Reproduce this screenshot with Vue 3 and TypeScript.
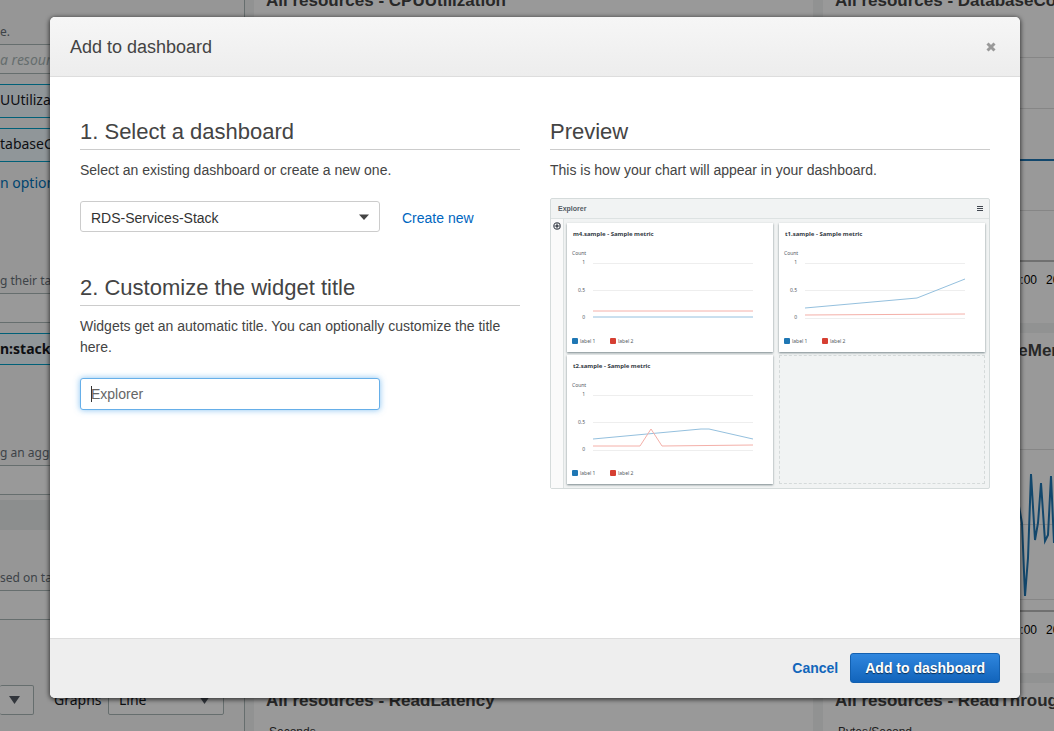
<script setup lang="ts">
import { ref } from 'vue'

interface Series {
  title: string
  blue: string
  red: string
  zero: boolean
}

const previews: Series[] = [
  { title: 'm4.sample - Sample metric', blue: '26,94 140,94 186,94', red: '26,88 140,88 186,88', zero: false },
  { title: 't1.sample - Sample metric', blue: '26,85 138,75 186,56', red: '26,92 186,91', zero: true },
  { title: 't2.sample - Sample metric', blue: '26,84 134,74 142,74 186,84', red: '26,91 73,91 84,74 95,91 186,90', zero: true },
]

const metrics = [
  { title: 'All resources - CPUUtilization', unit: 'Percent', chart: '' },
  { title: 'All resources - DatabaseConnections', unit: 'Count', chart: 'flat' },
  { title: 'All resources - FreeStorageSpace', unit: 'Bytes', chart: '' },
  { title: 'All resources - FreeableMemory', unit: 'Bytes', chart: 'wave' },
  { title: 'All resources - ReadLatency', unit: 'Seconds', chart: '' },
  { title: 'All resources - ReadThroughput', unit: 'Bytes/Second', chart: '' },
]

const dashboard = ref('RDS-Services-Stack')
const widgetTitle = ref('')
</script>

<template>
  <div class="page">
    <aside class="sidebar">
      <p class="hint">e.</p>
      <div class="field"><i>a resource</i></div>
      <div class="token">UUtilization</div>
      <div class="token">tabaseConnections</div>
      <a class="more" href="#">n options</a>
      <p class="hint spaced">g their tags</p>
      <div class="field"></div>
      <div class="token tag">n:stack-name</div>
      <p class="hint spaced">g an aggregation</p>
      <div class="field"></div>
      <div class="band"></div>
      <p class="hint near">sed on tags</p>
      <div class="field"></div>
      <div class="controls">
        <div class="pick first">
          <select aria-label="Columns"><option></option></select>
          <svg width="11" height="8" viewBox="0 0 11 8"><path d="M0 0h11L5.500 8z" fill="#545b64" /></svg>
        </div>
        <label for="graphs">Graphs</label>
        <div class="pick">
          <select id="graphs"><option>Line</option></select>
          <svg width="11" height="8" viewBox="0 0 11 8"><path d="M0 0h11L5.500 8z" fill="#545b64" /></svg>
        </div>
      </div>
    </aside>

    <main class="metrics">
      <section v-for="m in metrics" :key="m.title" class="metric">
        <h2>{{ m.title }}</h2>
        <p>{{ m.unit }}</p>
        <svg v-if="m.chart === 'flat'" class="plot" viewBox="0 0 559 340">
          <path d="M40 74.500H540M40 125.500H540M40 227.500H540" stroke="#e0e0e0" />
          <path d="M40 278H540" stroke="#bbb" stroke-width="2" />
          <path d="M40 177H540" stroke="#1f77b4" stroke-width="2" fill="none" />
          <text x="214" y="301" text-anchor="end">19:00</text>
          <text x="223" y="301">20:00</text>
        </svg>
        <svg v-if="m.chart === 'wave'" class="plot" viewBox="0 0 559 340">
          <path d="M40 116.500H540M40 191.500H540M40 266.500H540" stroke="#e0e0e0" />
          <path d="M40 278H540" stroke="#bbb" stroke-width="2" />
          <path d="M190 140L199 190L202 263L205 225L208 141L212 207L215 190L218 150L222 208L225 202L228 143L231 210" stroke="#1f77b4" stroke-width="2" fill="none" />
          <text x="214" y="301" text-anchor="end">19:00</text>
          <text x="223" y="301">20:00</text>
        </svg>
      </section>
    </main>

    <div class="overlay">
      <form class="modal" role="dialog" aria-labelledby="modal-title" @submit.prevent>
        <header class="modal-head">
          <h1 id="modal-title">Add to dashboard</h1>
          <button type="button" class="close" aria-label="Close">
            <svg width="10" height="10" viewBox="0 0 10 10"><path d="M1.500 1.500l7 7M8.500 1.500l-7 7" stroke="#999" stroke-width="3" /></svg>
          </button>
        </header>

        <div class="modal-body">
          <div>
            <h2 class="heading">1. Select a dashboard</h2>
            <p class="text"><label for="dashboard">Select an existing dashboard or create a new one.</label></p>
            <div class="row">
              <div class="select">
                <select id="dashboard" v-model="dashboard"><option>RDS-Services-Stack</option></select>
                <svg width="10" height="6" viewBox="0 0 10 6"><path d="M0 .5h10L5 6z" fill="#444" /></svg>
              </div>
              <a href="#">Create new</a>
            </div>
            <h2 class="heading second">2. Customize the widget title</h2>
            <p class="text"><label for="widget">Widgets get an automatic title. You can optionally customize the title here.</label></p>
            <div class="input">
              <input id="widget" v-model="widgetTitle" type="text" placeholder="Explorer" />
              <span class="caret"></span>
            </div>
          </div>

          <div>
            <h2 class="heading">Preview</h2>
            <p class="text">This is how your chart will appear in your dashboard.</p>
            <div class="preview">
              <div class="preview-head">
                <span>Explorer</span>
                <svg width="6" height="6" viewBox="0 0 6 6"><path d="M0 .5h6M0 2.500h6M0 4.500h6" stroke="#414750" /></svg>
              </div>
              <div class="preview-main">
                <div class="strip">
                  <svg width="8" height="8" viewBox="0 0 8 8" fill="none" stroke="#414750">
                    <circle cx="4" cy="4" r="3.200" stroke-width="1.100" />
                    <path d="M4 1v6M1 4h6" stroke-width=".8" />
                    <circle cx="4" cy="4" r="1" fill="#414750" />
                  </svg>
                </div>
                <div class="widgets">
                  <div v-for="p in previews" :key="p.title" class="widget">
                    <svg viewBox="0 0 206 129">
                      <text class="w-title" x="6" y="13">{{ p.title }}</text>
                      <text x="5" y="32">Count</text>
                      <text x="18" y="41" text-anchor="end">1</text>
                      <text x="18" y="69" text-anchor="end">0.5</text>
                      <text x="18" y="96" text-anchor="end">0</text>
                      <path d="M26 40.500H186M26 67.500H186" stroke="#eee" />
                      <path v-if="p.zero" d="M26 95.500H186" stroke="#eee" />
                      <g fill="none">
                        <polyline :points="p.blue" stroke="#94c0de" />
                        <polyline :points="p.red" stroke="#f4b0a9" />
                      </g>
                      <rect x="5" y="115" width="6" height="6" rx="1" fill="#1f77b4" />
                      <text x="13" y="120">label 1</text>
                      <rect x="43" y="115" width="6" height="6" rx="1" fill="#d63f32" />
                      <text x="51" y="120">label 2</text>
                    </svg>
                  </div>
                  <div class="empty"></div>
                </div>
              </div>
            </div>
          </div>
        </div>

        <footer class="modal-foot">
          <button type="button" class="cancel">Cancel</button>
          <button type="submit" class="submit">Add to dashboard</button>
        </footer>
      </form>
    </div>
  </div>
</template>

<style>
body {
  overflow: hidden;
}
</style>

<style scoped>
* {
  box-sizing: border-box;
}
h1,
h2,
p {
  margin: 0;
}
.page {
  position: relative;
  display: flex;
  height: 100vh;
  overflow: hidden;
  background: #f2f3f3;
  font-family: "Liberation Sans", Arial, sans-serif;
}

.sidebar {
  flex: 0 0 245px;
  padding-top: 24px;
  border-right: 1px solid #aab7b8;
  background: #fafafa;
  font: 14px/20px "Noto Sans", sans-serif;
  color: #16191f;
  white-space: nowrap;
}
.hint {
  margin-bottom: 4px;
  font-size: 12px;
  line-height: 16px;
  color: #687078;
}
.hint.spaced {
  margin-top: 80px;
}
.hint.near {
  margin-top: 40px;
}
.field {
  height: 30px;
  margin-right: 20px;
  border: 1px solid #aab7b8;
  border-left: 0;
  background: #fff;
  line-height: 30px;
  color: #aab7b8;
}
.token {
  height: 34px;
  margin: 10px 40px 0 0;
  border: 1px solid #00a1c9;
  border-left: 0;
  background: #f1faff;
  line-height: 30px;
}
.token.tag {
  height: 32px;
  font-weight: 700;
}
.more {
  display: block;
  margin-top: 11px;
  color: #0073bb;
  text-decoration: none;
}
.band {
  height: 30px;
  margin-top: 5px;
  background: #eaeded;
}
.controls {
  display: flex;
  align-items: center;
  margin-top: 65px;
}
.controls label {
  width: 54px;
}
.pick {
  position: relative;
  width: 116px;
}
.pick.first {
  width: 34px;
  margin-right: 20px;
}
.pick select {
  display: block;
  width: 100%;
  height: 30px;
  padding: 0 10px;
  border: 1px solid #aab7b8;
  border-radius: 2px;
  appearance: none;
  background: #fff;
  font: inherit;
  color: inherit;
}
.pick.first select {
  border-left: 0;
}
.pick svg {
  position: absolute;
  top: 11px;
  right: 14px;
}

.metrics {
  display: grid;
  flex: none;
  grid-template-columns: 559px 559px;
  grid-auto-rows: 340px;
  align-content: start;
  gap: 10px;
  margin: -17px 0 0 9px;
}
.metric {
  position: relative;
  padding: 6px 12px;
  background: #fff;
}
.metric h2 {
  font-size: 17px;
  line-height: 24px;
  color: #444;
}
.metric p {
  margin: 11px 3px;
  font-size: 12px;
  line-height: 16px;
  color: #333;
}
.plot {
  position: absolute;
  inset: 0;
  font-size: 12px;
}

.overlay {
  position: absolute;
  inset: 0;
  display: flex;
  padding: 17px 34px 33px 50px;
  background: rgba(0, 0, 0, 0.4);
}
.modal {
  display: flex;
  flex: 1;
  flex-direction: column;
  border-radius: 5px;
  background: #fff;
  box-shadow: 0 1px 4px 1px rgba(0, 0, 0, 0.6);
  font-size: 14px;
  color: #444;
  overflow: hidden;
}
.modal-head {
  display: flex;
  align-items: center;
  justify-content: space-between;
  height: 60px;
  padding: 0 20px;
  border-bottom: 1px solid #ddd;
  background: linear-gradient(#f6f6f6, #ededed);
}
.modal-head h1 {
  padding-top: 2px;
  font-size: 18px;
  font-weight: 400;
}
.close {
  display: flex;
  padding: 4px;
  border: 0;
  background: none;
}
.modal-body {
  display: grid;
  flex: 1;
  grid-template-columns: 1fr 1fr;
  align-content: start;
  gap: 30px;
  padding: 40px 30px 0;
}
.heading {
  padding-bottom: 2px;
  border-bottom: 1px solid #ccc;
  font-size: 22px;
  font-weight: 400;
  line-height: 30px;
}
.heading.second {
  margin-top: 41px;
}
.text {
  margin-top: 10px;
  line-height: 21px;
}
.row {
  display: flex;
  align-items: center;
  gap: 22px;
  margin-top: 20px;
}
.row a {
  padding-top: 2px;
  color: #0066c0;
  text-decoration: none;
}
.select,
.input {
  position: relative;
  width: 300px;
}
.select select {
  display: block;
  width: 100%;
  height: 31px;
  padding: 2px 10px 0;
  border: 1px solid #ccc;
  border-radius: 3px;
  appearance: none;
  background: #fff;
  font: inherit;
  color: #333;
}
.select svg {
  position: absolute;
  top: 13px;
  right: 11px;
}
.input {
  margin-top: 20px;
}
.input input {
  display: block;
  width: 100%;
  height: 32px;
  padding: 0 10px;
  border: 1px solid #66afe9;
  border-radius: 3px;
  outline: 0;
  box-shadow: 0 0 6px rgba(82, 168, 236, 0.7);
  font: inherit;
  color: #444;
}
.input input::placeholder {
  color: #666;
}
.caret {
  position: absolute;
  top: 8px;
  left: 11px;
  width: 1px;
  height: 16px;
  background: #333;
}

.preview {
  margin-top: 17px;
  border: 1px solid #d5dbdb;
  border-radius: 2px;
  background: #f1f3f3;
}
.preview-head {
  display: flex;
  align-items: center;
  justify-content: space-between;
  height: 20px;
  padding: 0 6px 0 7px;
  border-bottom: 1px solid #dde2e2;
  font-size: 7px;
  font-weight: 700;
  color: #545b64;
}
.preview-main {
  display: flex;
}
.strip {
  flex: 0 0 13px;
  padding: 3px 2px;
  border-right: 1px solid #dde2e2;
  background: #fafafa;
}
.strip svg {
  display: block;
}
.widgets {
  display: grid;
  flex: 1;
  grid-template-columns: 1fr 1fr;
  gap: 3px 6px;
  padding: 4px 4px 4px 3px;
}
.widget {
  background: #fff;
  box-shadow: 0 1px 2px rgba(0, 28, 36, 0.5);
}
.widget svg {
  display: block;
  width: 100%;
  font: 5px "Noto Sans", sans-serif;
  fill: #545b64;
}
.widget .w-title {
  font-size: 6px;
  font-weight: 700;
  fill: #333a44;
}
.empty {
  border: 1px dashed #d5dada;
}

.modal-foot {
  display: flex;
  align-items: center;
  justify-content: flex-end;
  gap: 12px;
  height: 60px;
  padding: 0 20px 2px;
  border-top: 1px solid #ddd;
  background: #eee;
}
.modal-foot button {
  font: bold 14px "Liberation Sans", Arial, sans-serif;
}
.cancel {
  padding: 0;
  border: 0;
  background: none;
  color: #1166bb;
}
.submit {
  height: 30px;
  padding: 0 14px;
  border: 1px solid #1360b0;
  border-radius: 3px;
  background: linear-gradient(#2f86de, #1264bb);
  color: #fff;
  text-shadow: 0 1px 1px rgba(0, 0, 0, 0.6);
}
</style>
